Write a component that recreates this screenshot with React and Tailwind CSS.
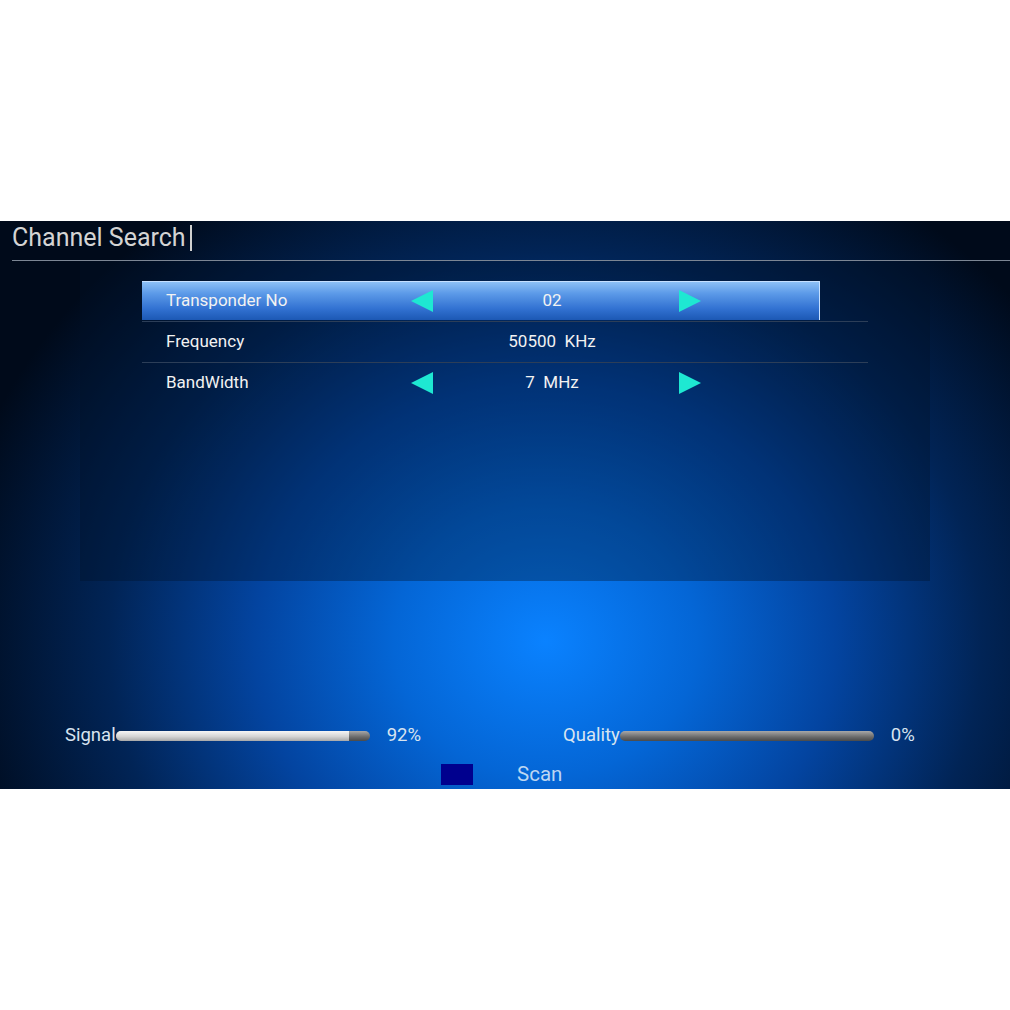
import React from "react";

function Arrow({ dir }) {
  return (
    <svg width="22" height="22" viewBox="0 0 22 22" className="shrink-0">
      {dir === "left" ? (
        <polygon points="22,0 22,22 0,11" fill="#1ee8d2" />
      ) : (
        <polygon points="0,0 0,22 22,11" fill="#1ee8d2" />
      )}
    </svg>
  );
}

function Row({ label, value, arrows, active, border }) {
  return (
    <div className={`h-[41px] flex items-start ${border ? "border-b border-[#2c3e58]" : ""}`}>
      <div
        className={`h-[39px] w-[678px] flex items-center pl-[24px] text-[17px] text-[#f2f2f2] ${
          active
            ? "bg-[linear-gradient(to_bottom,#8cc0f6_0%,#5c9ae8_30%,#3272d2_70%,#1c58b4_100%)] border-t border-r border-[#c6e0ff]"
            : ""
        }`}
      >
        <div className="w-[245px]">{label}</div>
        {arrows ? <Arrow dir="left" /> : <div className="w-[22px]" />}
        <div className="w-[238px] text-center whitespace-pre">{value}</div>
        <div className="w-[8px]" />
        {arrows ? <Arrow dir="right" /> : <div className="w-[22px]" />}
      </div>
    </div>
  );
}

function Bar({ pct }) {
  return (
    <div className="w-[254px] h-[10px] rounded-full overflow-hidden flex bg-[linear-gradient(to_bottom,#a8a8a8,#6a6a6a_60%,#4a4a4a)]">
      <div
        className="h-full bg-[linear-gradient(to_bottom,#f6f6f6,#d4d4d4_55%,#a8a8a8)]"
        style={{ width: `${pct}%` }}
      />
    </div>
  );
}

export default function App() {
  return (
    <div className="w-[1010px] h-[1010px] bg-white pt-[221px] font-['Roboto',sans-serif]">
      <div className="h-[568px] flex flex-col overflow-hidden bg-[radial-gradient(ellipse_60%_95%_at_54%_74%,#0a82ff_0%,#0466d6_25%,#0344a0_48%,#012456_72%,#000a1a_100%)]">
        <div className="h-[39px] flex items-end px-[12px] pb-[7px]">
          <span className="text-[25px] leading-[30px] text-[#d4d4d4]">Channel Search</span>
          <span className="w-[2px] h-[26px] bg-[#d0d0d0] ml-[4px] mb-[2px]" />
        </div>
        <div className="ml-[12px] h-px bg-[#7c8694]" />
        <div className="mx-[80px] h-[320px] bg-[#001028]/35 pt-[20px] pl-[62px]">
          <div className="w-[726px]">
            <Row label="Transponder No" value="02" arrows active border />
            <Row label="Frequency" value="50500  KHz" border />
            <Row label="BandWidth" value="7  MHz" arrows />
          </div>
        </div>
        <div className="mt-[143px] h-[24px] flex items-center text-[18.5px] text-[#d8e4f0]">
          <div className="w-[563px] pl-[65px] flex items-center">
            <span>Signal</span>
            <Bar pct={92} />
            <span className="ml-[17px]">92%</span>
          </div>
          <div className="flex items-center">
            <span>Quality</span>
            <Bar pct={0} />
            <span className="ml-[17px]">0%</span>
          </div>
        </div>
        <div className="mt-[15px] h-[22px] flex items-center pl-[441px]">
          <div className="w-[32px] h-[21px] bg-[#00008e]" />
          <span className="ml-[44px] text-[20.5px] text-[#bcd6f2]">Scan</span>
        </div>
      </div>
    </div>
  );
}
